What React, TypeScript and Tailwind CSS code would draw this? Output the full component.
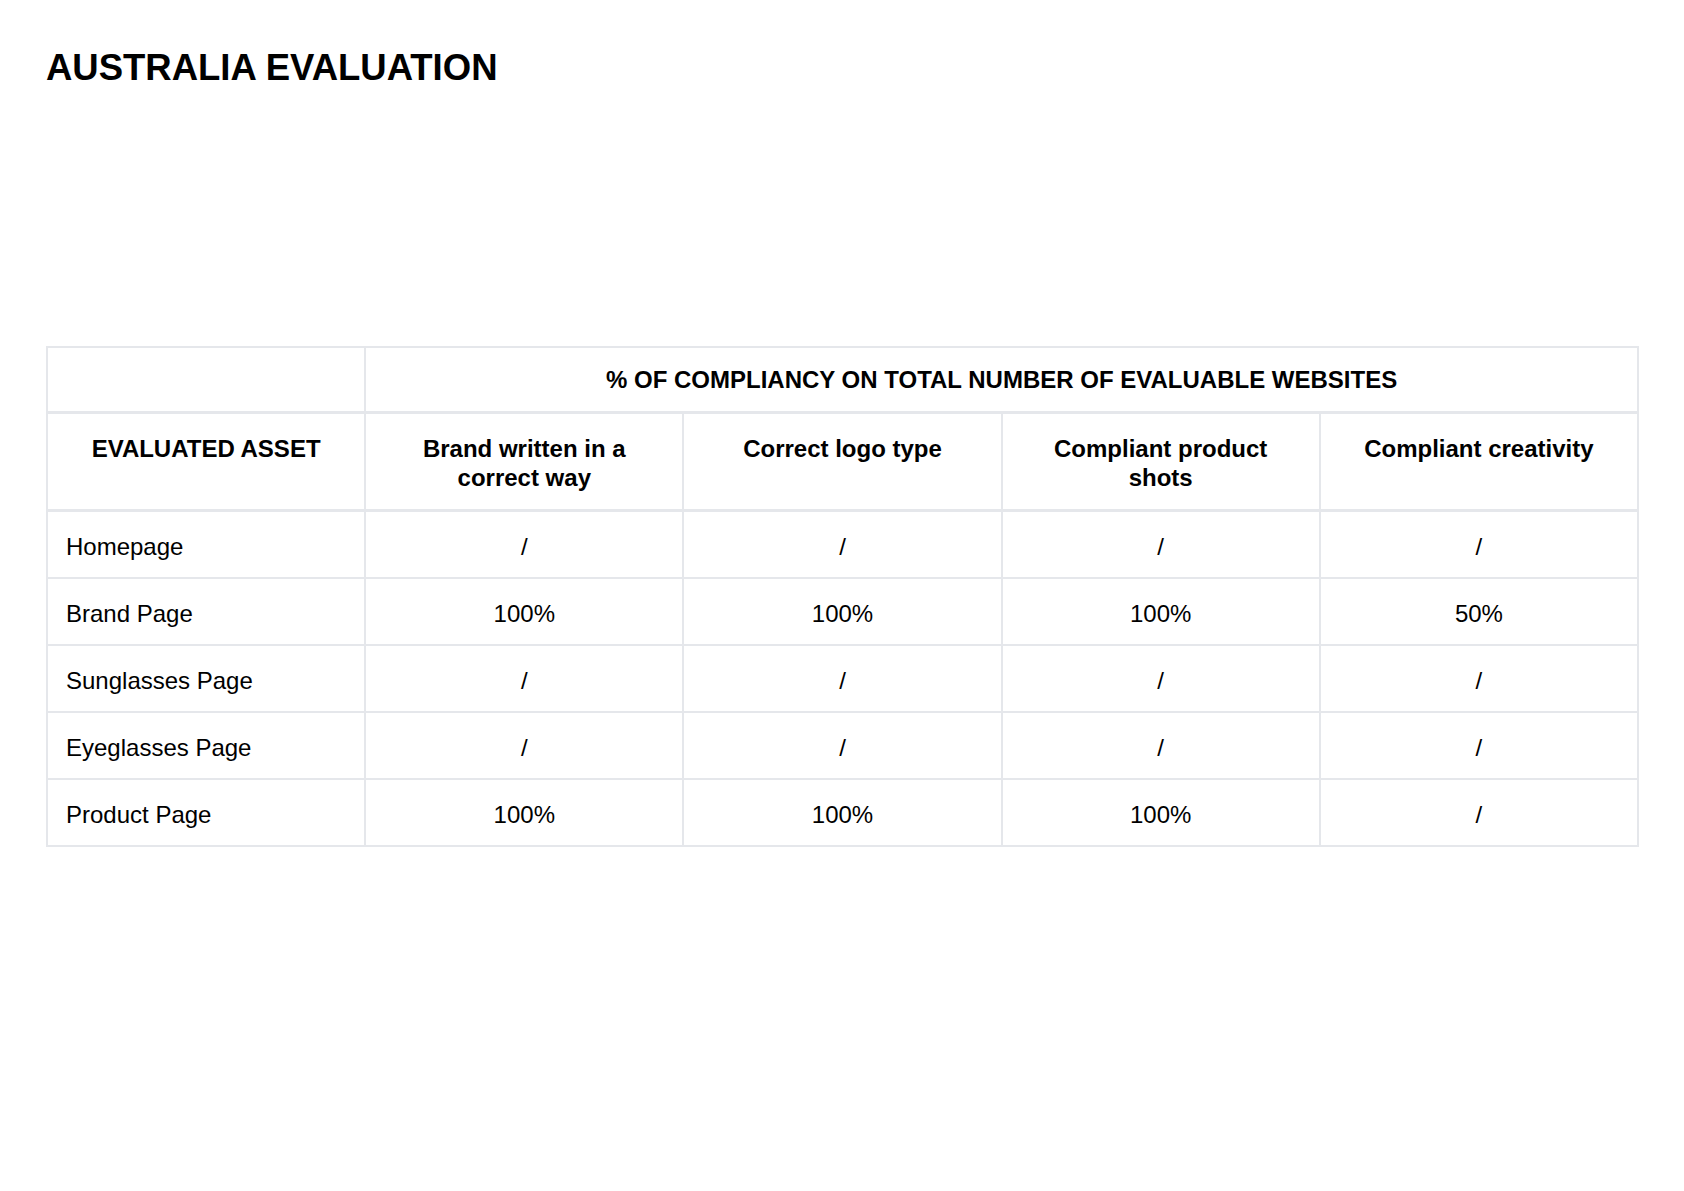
import React from "react";

const cols = [
  "Brand written in a correct way",
  "Correct logo type",
  "Compliant product shots",
  "Compliant creativity",
];

const rows: [string, string[]][] = [
  ["Homepage", ["/", "/", "/", "/"]],
  ["Brand Page", ["100%", "100%", "100%", "50%"]],
  ["Sunglasses Page", ["/", "/", "/", "/"]],
  ["Eyeglasses Page", ["/", "/", "/", "/"]],
  ["Product Page", ["100%", "100%", "100%", "/"]],
];

export default function App() {
  return (
    <div
      className="min-h-[1191px] w-[1684px] bg-white text-black"
      style={{ fontFamily: '"Liberation Sans", Arial, Helvetica, sans-serif' }}
    >
      <div className="pl-[46px] pt-[50px]">
        <h1 className="text-[36.5px] font-bold leading-[36px]">AUSTRALIA EVALUATION</h1>
      </div>

      <div className="ml-[46px] mt-[260px] w-[1593px] border-l-2 border-t-2 border-[#e5e7eb]">
        <div className="grid grid-cols-5">
          <div className="h-[66px] border-b-[3px] border-r-2 border-[#e5e7eb]" />
          <div className="col-span-4 flex h-[66px] items-center justify-center border-b-[3px] border-r-2 border-[#e5e7eb] pt-[1px] text-[24px] font-bold">
            % OF COMPLIANCY ON TOTAL NUMBER OF EVALUABLE WEBSITES
          </div>
        </div>
        <div className="grid grid-cols-5">
          <div className="h-[98px] border-b-[3px] border-r-2 border-[#e5e7eb] px-6 pt-[20px] text-center text-[24px] font-bold leading-[29px]">
            EVALUATED ASSET
          </div>
          {cols.map((c) => (
            <div
              key={c}
              className="h-[98px] border-b-[3px] border-r-2 border-[#e5e7eb] px-6 pt-[20px] text-center text-[24px] font-bold leading-[29px]"
            >
              {c}
            </div>
          ))}
        </div>
        {rows.map(([name, vals]) => (
          <div key={name} className="grid grid-cols-5">
            <div className="flex h-[67px] items-center border-b-2 border-r-2 border-[#e5e7eb] pl-[18px] pt-[4px] text-[24px]">
              {name}
            </div>
            {vals.map((v, i) => (
              <div
                key={i}
                className="flex h-[67px] items-center justify-center border-b-2 border-r-2 border-[#e5e7eb] pt-[4px] text-[24px]"
              >
                {v}
              </div>
            ))}
          </div>
        ))}
      </div>
    </div>
  );
}
